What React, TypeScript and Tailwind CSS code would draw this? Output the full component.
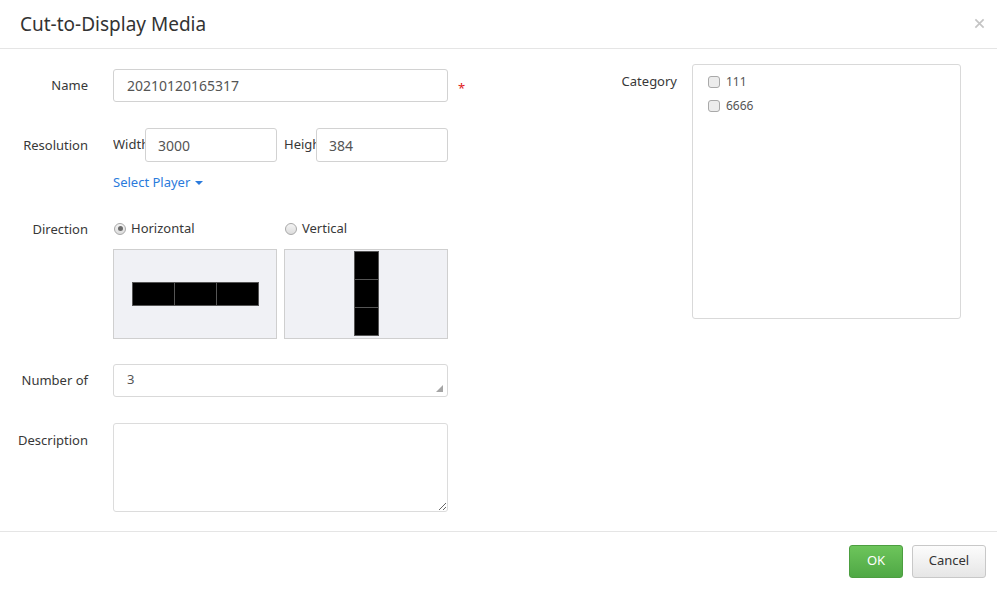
import React from "react";

const font = { fontFamily: '"Noto Sans", "Liberation Sans", sans-serif' };

function Radio({ checked }: { checked?: boolean }) {
  return (
    <span className="relative inline-block h-[12px] w-[12px] rounded-full border border-[#a8a8a8] bg-gradient-to-b from-[#f4f4f4] to-[#dcdcdc]">
      {checked && (
        <span className="absolute left-[2.5px] top-[2.5px] h-[5px] w-[5px] rounded-full bg-[#6b6b6b]" />
      )}
    </span>
  );
}

function Checkbox() {
  return (
    <span className="inline-block h-[12px] w-[12px] rounded-[3px] border border-[#a9a9a9] bg-[#ececec]" />
  );
}

function Label({ children, className = "" }: { children: React.ReactNode; className?: string }) {
  return (
    <div className={`w-[88px] shrink-0 whitespace-nowrap text-right text-[13px] text-[#383838] ${className}`}>
      {children}
    </div>
  );
}

function Cell({ className = "" }: { className?: string }) {
  return <div className={`border border-[#555] bg-black ${className}`} />;
}

export default function App() {
  return (
    <div style={font} className="flex h-[590px] w-[997px] flex-col bg-white text-[#333]">
      {/* Header */}
      <div className="flex h-[49px] shrink-0 items-center justify-between border-b border-[#e5e5e5] pl-[20px] pr-[12px]">
        <h1 className="text-[19px] font-normal leading-none text-[#333]">Cut-to-Display Media</h1>
        <svg viewBox="0 0 12 12" width="11" height="11" className="mb-[2px]">
          <path d="M1.5 1.5l9 9M10.5 1.5l-9 9" stroke="#c4c4c4" strokeWidth="1.8" />
        </svg>
      </div>

      {/* Body */}
      <div className="flex flex-1 pt-[15px]">
        <div className="flex w-[600px] shrink-0 flex-col">
          {/* Name */}
          <div className="mt-[5px] flex items-center">
            <Label className="mt-[1px]">Name</Label>
            <div className="ml-[25px] flex h-[33px] w-[335px] items-center rounded-[3px] border border-[#d2d2d2] px-[13px] text-[14px] text-[#555]">
              20210120165317
            </div>
            <span className="ml-[10px] mt-[6px] text-[13px] text-[#e02020]">*</span>
          </div>

          {/* Resolution */}
          <div className="mt-[26px] flex items-center">
            <Label className="mt-[1px]">Resolution</Label>
            <div className="ml-[25px] flex items-center">
              <span className="w-[32px] overflow-hidden whitespace-nowrap text-[13px] text-[#383838]">Width</span>
              <div className="flex h-[34px] w-[132px] items-center rounded-[3px] border border-[#d2d2d2] px-[12px] text-[14px] text-[#555]">
                3000
              </div>
              <span className="ml-[7px] w-[32px] overflow-hidden whitespace-nowrap text-[13px] text-[#383838]">Height</span>
              <div className="flex h-[34px] w-[132px] items-center rounded-[3px] border border-[#d2d2d2] px-[12px] text-[14px] text-[#555]">
                384
              </div>
            </div>
          </div>
          <div className="ml-[113px] mt-[11px] flex items-center gap-[5px] text-[13px] text-[#2b7bdc]">
            Select Player
            <svg viewBox="0 0 8 4" width="8" height="4">
              <path d="M0 0h8L4 4z" fill="#2b7bdc" />
            </svg>
          </div>

          {/* Direction */}
          <div className="mt-[26px] flex">
            <Label className="leading-[20px]">Direction</Label>
            <div className="ml-[25px] flex gap-[7px]">
              <div className="flex flex-col">
                <div className="flex h-[20px] items-center gap-[5px] pl-[1px] text-[13px] text-[#383838]">
                  <Radio checked />
                  Horizontal
                </div>
                <div className="mt-[10px] flex h-[90px] w-[164px] items-center justify-center border border-[#cfcfcf] bg-[#f0f1f5]">
                  <div className="flex h-[24px]">
                    <Cell className="w-[43px]" />
                    <Cell className="-ml-px w-[43px]" />
                    <Cell className="-ml-px w-[43px]" />
                  </div>
                </div>
              </div>
              <div className="flex flex-col">
                <div className="flex h-[20px] items-center gap-[5px] pl-[1px] text-[13px] text-[#383838]">
                  <Radio />
                  Vertical
                </div>
                <div className="mt-[10px] flex h-[90px] w-[164px] items-center justify-center border border-[#cfcfcf] bg-[#f0f1f5]">
                  <div className="flex w-[25px] flex-col">
                    <Cell className="h-[29px]" />
                    <Cell className="-mt-px h-[29px]" />
                    <Cell className="-mt-px h-[29px]" />
                  </div>
                </div>
              </div>
            </div>
          </div>

          {/* Number of */}
          <div className="mt-[25px] flex items-center">
            <Label className="mt-[1px]">Number of</Label>
            <div className="relative ml-[25px] flex h-[33px] w-[335px] items-center rounded-[3px] border border-[#d9d9d9] px-[13px] text-[13px] text-[#555]">
              3
              <svg viewBox="0 0 7 7" width="7" height="7" className="absolute bottom-[4px] right-[4px]">
                <path d="M7 0v7H0z" fill="#a5a5a5" />
              </svg>
            </div>
          </div>

          {/* Description */}
          <div className="mt-[26px] flex">
            <Label className="pt-[8px]">Description</Label>
            <textarea className="ml-[25px] h-[89px] w-[335px] rounded-[3px] border border-[#dcdcdc] outline-none" />
          </div>
        </div>

        {/* Category */}
        <div className="flex items-start">
          <div className="w-[77px] shrink-0 pt-[8px] text-right text-[13px] text-[#383838]">Category</div>
          <div className="ml-[15px] h-[255px] w-[269px] rounded-[3px] border border-[#d9d9d9] px-[15px] py-[9px]">
            <div className="flex h-[16px] items-center gap-[6px] text-[12px] text-[#555]">
              <Checkbox />
              111
            </div>
            <div className="mt-[8px] flex h-[16px] items-center gap-[6px] text-[12px] text-[#555]">
              <Checkbox />
              6666
            </div>
          </div>
        </div>
      </div>

      {/* Footer */}
      <div className="flex h-[59px] shrink-0 items-center justify-end gap-[9px] border-t border-[#e5e5e5] pr-[11px]">
        <button className="h-[33px] w-[54px] rounded-[3px] border border-[#4c9e40] bg-gradient-to-b from-[#6dc55b] to-[#4fa845] text-[13px] text-white">
          OK
        </button>
        <button className="h-[33px] w-[74px] rounded-[3px] border border-[#c8c8c8] bg-gradient-to-b from-[#fcfcfc] to-[#e6e6e6] text-[13px] text-[#333]">
          Cancel
        </button>
      </div>
    </div>
  );
}
